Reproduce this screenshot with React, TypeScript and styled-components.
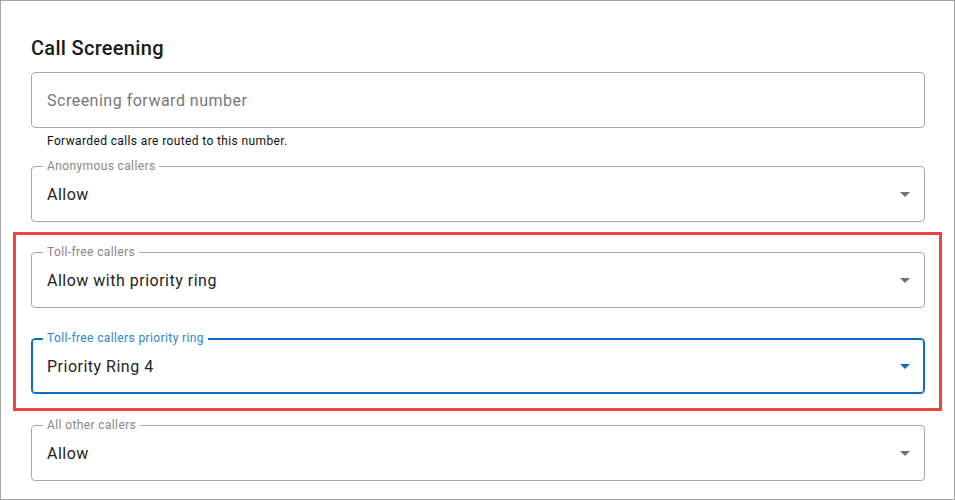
import React from 'react';
import styled, { createGlobalStyle } from 'styled-components';

interface IField {
    label?: string;
    value?: string;
    placeholder?: string;
    select?: boolean;
    focused?: boolean;
}

const GlobalStyle = createGlobalStyle`
    html, body {
        margin: 0;
        padding: 0;
        background: #ffffff;
    }
    body {
        font-family: Roboto, "Liberation Sans", Arial, sans-serif;
        color: #1f1f1f;
    }
`

const Field = ({ label, value, placeholder, select, focused }: IField) => (
    <StField focused={focused}>
        {label && <StLabel focused={focused}>{label}</StLabel>}
        {value ? <StValue>{value}</StValue> : <StPlaceholder>{placeholder}</StPlaceholder>}
        {select && (
            <StCaret viewBox="0 0 24 24" focused={focused}>
                <path d="M7 10l5 5 5-5z" />
            </StCaret>
        )}
    </StField>
);

const App = () => {
    return (
        <>
            <GlobalStyle />
            <StPage>
                <StTitle>Call Screening</StTitle>
                <div>
                    <Field placeholder="Screening forward number" />
                    <StHelper>Forwarded calls are routed to this number.</StHelper>
                </div>
                <StSpaced top={15}>
                    <Field label="Anonymous callers" value="Allow" select />
                </StSpaced>
                <StHighlight>
                    <Field label="Toll-free callers" value="Allow with priority ring" select />
                    <Field label="Toll-free callers priority ring" value="Priority Ring 4" select focused />
                </StHighlight>
                <StSpaced top={14}>
                    <Field label="All other callers" value="Allow" select />
                </StSpaced>
            </StPage>
        </>
    );
};

const StPage = styled.div`
    width: 955px;
    height: 500px;
    box-sizing: border-box;
    border: 1px solid #a4a4a4;
    padding: 35px 29px 0 30px;
    display: flex;
    flex-direction: column;
    overflow: hidden;
`

const StTitle = styled.h2`
    margin: 0 0 12px 0;
    font-size: 20px;
    line-height: 24px;
    font-weight: 500;
    letter-spacing: 0.3px;
    color: #1a1a1a;
`

const StField = styled.div< { focused?: boolean } >`
    position: relative;
    height: 56px;
    box-sizing: border-box;
    border: 1px solid ${props => props.focused ? '#0b6ebe' : '#a8a8a8'};
    box-shadow: ${props => props.focused ? 'inset 0 0 0 1px #0b6ebe' : 'none'};
    border-radius: 4px;
    padding: 0 15px;
    display: flex;
    align-items: center;
    background: #ffffff;
`

const StLabel = styled.span< { focused?: boolean } >`
    position: absolute;
    top: -8px;
    left: 11px;
    padding: 0 4px;
    background: #ffffff;
    font-size: 12px;
    line-height: 14px;
    letter-spacing: 0.38px;
    color: ${props => props.focused ? '#2c86d0' : '#878787'};
    white-space: nowrap;
`

const StValue = styled.span`
    font-size: 16px;
    line-height: 23px;
    letter-spacing: 0.5px;
    color: #232323;
`

const StPlaceholder = styled.span`
    font-size: 16px;
    line-height: 23px;
    letter-spacing: 0.5px;
    color: #777777;
`

const StCaret = styled.svg< { focused?: boolean } >`
    position: absolute;
    right: 7px;
    top: 50%;
    width: 24px;
    height: 24px;
    margin-top: -12px;
    fill: ${props => props.focused ? '#0b6ebe' : '#737373'};
`

const StHelper = styled.p`
    margin: 3px 0 0 16px;
    font-size: 12px;
    line-height: 20px;
    letter-spacing: 0.38px;
    color: #111111;
`

const StSpaced = styled.div< { top: number } >`
    margin-top: ${props => props.top}px;
`

const StHighlight = styled.div`
    margin: 10px -17px 0 -18px;
    border: 3px solid #ef4444;
    padding: 17px 14px 14px 15px;
    display: flex;
    flex-direction: column;
    gap: 30px;
`

export default App;
